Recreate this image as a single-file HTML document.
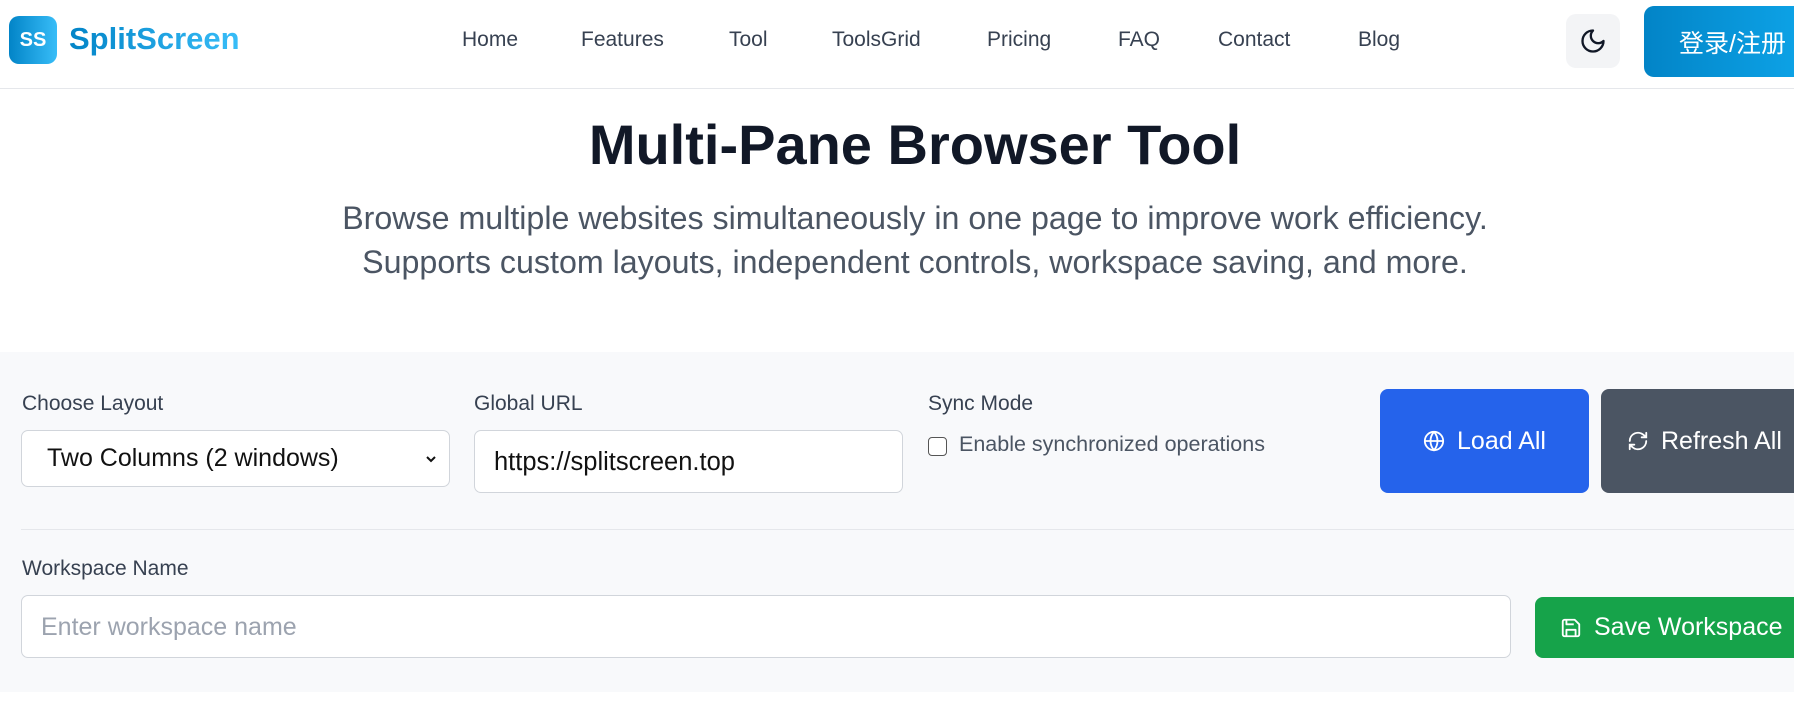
<!DOCTYPE html>
<html><head><meta charset="utf-8"><style>
*{box-sizing:border-box;margin:0;padding:0}
html,body{width:1794px;height:711px;overflow:hidden;background:#fff;font-family:"Liberation Sans","Noto Sans CJK SC",sans-serif;color:#374151}
.a{position:absolute;white-space:nowrap}
.nav{font-size:21px;color:#374151;top:28px}
.lbl{font-size:21px;color:#374151}
.box{position:absolute;background:#fff;border:1px solid #d1d5db;border-radius:7px}
.btn{position:absolute;border-radius:8px;color:#fff;font-size:25px;display:flex;align-items:center;justify-content:center;gap:12px}
</style></head><body>
<div class="a" style="left:0;top:0;width:1794px;height:89px;border-bottom:1px solid #e5e7eb"></div>
<div class="a" style="left:9px;top:16px;width:48px;height:48px;border-radius:10px;background:linear-gradient(90deg,#0284c7,#38bdf8);color:#fff;font-weight:bold;font-size:20px;display:flex;align-items:center;justify-content:center">SS</div>
<div class="a" style="left:69px;top:21px;font-size:31px;font-weight:bold;background:linear-gradient(90deg,#0284c7,#38bdf8);-webkit-background-clip:text;color:transparent">SplitScreen</div>
<div class="a nav" style="left:462px">Home</div>
<div class="a nav" style="left:581px">Features</div>
<div class="a nav" style="left:729px">Tool</div>
<div class="a nav" style="left:832px">ToolsGrid</div>
<div class="a nav" style="left:987px">Pricing</div>
<div class="a nav" style="left:1118px">FAQ</div>
<div class="a nav" style="left:1218px">Contact</div>
<div class="a nav" style="left:1358px">Blog</div>
<div class="a" style="left:1566px;top:14px;width:54px;height:54px;border-radius:10px;background:#f3f4f6;display:flex;align-items:center;justify-content:center">
<svg width="28" height="28" viewBox="0 0 24 24" fill="none" stroke="#111827" stroke-width="2" stroke-linecap="round" stroke-linejoin="round"><path d="M12 3a6 6 0 0 0 9 9 9 9 0 1 1-9-9Z"/></svg></div>
<div class="a" style="left:1644px;top:6px;width:170px;height:71px;border-radius:10px;background:linear-gradient(90deg,#0284c7,#0ea5e9);color:#fff;font-size:25px;padding:18px 0 0 35px">登录/注册</div>

<div class="a" style="left:0;width:1830px;top:112px;text-align:center;font-size:56px;font-weight:bold;color:#111827">Multi-Pane Browser Tool</div>
<div class="a" style="left:0;width:1830px;top:196px;text-align:center;font-size:32.2px;color:#4b5563;line-height:44px">Browse multiple websites simultaneously in one page to improve work efficiency.<br>Supports custom layouts, independent controls, workspace saving, and more.</div>

<div class="a" style="left:0;top:352px;width:1794px;height:340px;background:#f8f9fb"></div>
<div class="a lbl" style="left:22px;top:392px">Choose Layout</div>
<div class="box" style="left:21px;top:430px;width:429px;height:57px"><span class="a" style="left:25px;top:13px;font-size:25px;color:#111">Two Columns (2 windows)</span><svg class="a" style="left:402px;top:22px" width="14" height="12" viewBox="0 0 14 12"><path d="M3 4l4 4 4-4" fill="none" stroke="#111" stroke-width="2"/></svg></div>
<div class="a lbl" style="left:474px;top:392px">Global URL</div>
<div class="box" style="left:474px;top:430px;width:429px;height:63px"><span class="a" style="left:19px;top:17px;font-size:25.5px;color:#111">https://splitscreen.top</span></div>
<div class="a lbl" style="left:928px;top:392px">Sync Mode</div>
<div class="a" style="left:928px;top:437px;width:19px;height:19px;border:1.5px solid #555;border-radius:4px;background:#fff"></div>
<div class="a lbl" style="left:959px;top:432px;color:#4b5563;font-size:21.5px">Enable synchronized operations</div>
<div class="btn" style="left:1380px;top:389px;width:209px;height:104px;background:#2563eb"><svg width="22" height="22" viewBox="0 0 24 24" fill="none" stroke="#fff" stroke-width="2"><circle cx="12" cy="12" r="10"/><path d="M2 12h20M12 2a15 15 0 0 1 0 20a15 15 0 0 1 0-20"/></svg>Load All</div>
<div class="btn" style="left:1601px;top:389px;width:230px;height:104px;background:#4b5563;justify-content:flex-start;padding-left:26px"><svg width="22" height="22" viewBox="0 0 24 24" fill="none" stroke="#fff" stroke-width="2" stroke-linecap="round"><path d="M3 12a9 9 0 0 1 15-6.7L21 8M21 3v5h-5M21 12a9 9 0 0 1-15 6.7L3 16M3 21v-5h5"/></svg>Refresh All</div>
<div class="a" style="left:21px;top:529px;width:1773px;height:1px;background:#e5e7eb"></div>
<div class="a lbl" style="left:22px;top:557px">Workspace Name</div>
<div class="box" style="left:21px;top:595px;width:1490px;height:63px"><span class="a" style="left:19px;top:17px;font-size:25px;color:#9ca3af">Enter workspace name</span></div>
<div class="btn" style="left:1535px;top:597px;width:290px;height:61px;background:#16a34a;justify-content:flex-start;padding-left:25px"><svg width="22" height="22" viewBox="0 0 24 24" fill="none" stroke="#fff" stroke-width="2" stroke-linejoin="round"><path d="M5 3h11l5 5v11a2 2 0 0 1-2 2H5a2 2 0 0 1-2-2V5a2 2 0 0 1 2-2z"/><path d="M7 3v5h8M7 21v-7h10v7"/></svg>Save Workspace</div>
</body></html>
